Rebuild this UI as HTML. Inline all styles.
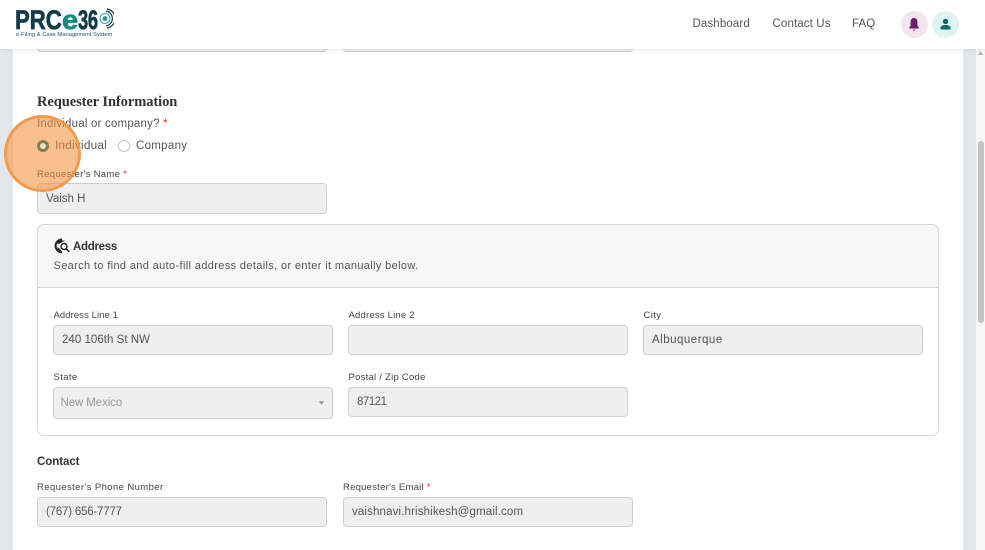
<!DOCTYPE html>
<html><head><meta charset="utf-8"><style>
html,body{margin:0;padding:0;width:985px;height:550px;overflow:hidden;background:#fff;font-family:"Liberation Sans",sans-serif}
.a{position:absolute;white-space:nowrap}
.l{font-size:9.5px;letter-spacing:.36px;color:#444;line-height:12px}
.i{position:absolute;box-sizing:border-box;background:#efefef;border:1px solid #cfcfcf;border-radius:4px;font-size:11.5px;letter-spacing:.3px;color:#555;padding-left:8px;display:flex;align-items:center}
.r{color:#d9342b}
.n{font-size:11.5px;letter-spacing:.12px;color:#555;top:17px;line-height:14px}
.g{font-size:27px;font-weight:bold;line-height:30px;top:5px;transform-origin:left;-webkit-text-stroke:.7px currentColor}
</style></head><body>
<div class="a" style="left:0;top:0;width:13px;height:550px;background:#e2e7ee"></div>
<div class="a" style="left:963px;top:0;width:13px;height:550px;background:#e2e7ee"></div>
<div class="a" style="left:976px;top:0;width:9px;height:550px;background:#f7f7f7"></div>
<div class="a" style="left:977.5px;top:141px;width:6px;height:182px;background:#c4c4c4;border-radius:3px"></div>
<svg class="a" style="left:977px;top:50px" width="7" height="6"><path d="M3.5 1L6.5 5H.5z" fill="#bbb"/></svg>

<div class="i" style="left:37px;top:30px;width:290px;height:22px"></div>
<div class="i" style="left:343px;top:30px;width:290px;height:22px"></div>

<div class="a" style="left:0;top:0;width:985px;height:49px;background:#fff;box-shadow:0 2px 5px rgba(0,0,0,.07)"></div>
<div class="a g" style="left:15px;color:#123a48;transform:scaleX(.82)">PRC</div>
<div class="a g" style="left:62px;color:#178a85;transform:scaleX(1.08)">e</div>
<div class="a g" style="left:78px;color:#123a48;transform:scaleX(.68);letter-spacing:-.5px">36</div>
<svg class="a" style="left:96px;top:8px" width="18" height="21" viewBox="0 0 18 21"><circle cx="9" cy="10.500" r="2.400" fill="#1a9c98"/><circle cx="9" cy="10.500" r="5" fill="none" stroke="#3fa8a4" stroke-width="1.100"/><path d="M10 3a7.600 7.600 0 0 1 0 15M11 1a9.600 9.600 0 0 1 0 19" fill="none" stroke="#123a48" stroke-width="1.200"/></svg>
<div class="a" style="left:16px;top:30.500px;font-size:5.800px;letter-spacing:.01px;color:#33505a;line-height:8px">e-Filing &amp; Case Management System</div>

<div class="a n" style="left:692.500px">Dashboard</div>
<div class="a n" style="left:772.500px">Contact Us</div>
<div class="a n" style="left:852px">FAQ</div>
<div class="a" style="left:901px;top:11px;width:27px;height:27px;border-radius:50%;background:#f3e5f0"></div>
<svg class="a" style="left:907px;top:17px" width="14" height="15" viewBox="0 0 14 15"><path d="M7 1C5 1 3.600 2.600 3.600 5V8.500L2.200 10.800V11.500H11.800V10.800L10.400 8.500V5C10.400 2.600 9 1 7 1Z" fill="#6e1f63"/><path d="M5.500 12.600h3L7 14z" fill="#6e1f63"/></svg>
<div class="a" style="left:932px;top:11px;width:27px;height:27px;border-radius:50%;background:#e0f3f3"></div>
<svg class="a" style="left:939px;top:18px" width="13" height="13" viewBox="0 0 13 13"><circle cx="6.500" cy="3.500" r="2.700" fill="#0f6b66"/><path d="M1.500 11.500V10C1.500 8 3.500 7 6.500 7S11.500 8 11.500 10V11.500Z" fill="#0f6b66"/></svg>

<div class="a" style="left:37px;top:92.500px;font-family:'Liberation Serif',serif;font-weight:bold;font-size:14.500px;letter-spacing:-.08px;color:#333;line-height:18px">Requester Information</div>
<div class="a" style="left:37px;top:116.500px;font-size:11.500px;letter-spacing:.2px;color:#555;line-height:14px">Individual or company? <span class="r">*</span></div>

<div class="a" style="left:55px;top:139px;font-size:11.500px;letter-spacing:.35px;color:#555;line-height:14px">Individual</div>
<div class="a" style="left:118px;top:140px;width:12px;height:12px;box-sizing:border-box;border-radius:50%;background:#fff;border:1px solid #c4c4c4"></div>
<div class="a" style="left:136px;top:139px;font-size:11.500px;letter-spacing:.3px;color:#555;line-height:14px">Company</div>

<div class="a l" style="left:37px;top:169px;letter-spacing:.3px">Requester's Name <span class="r">*</span></div>
<div class="i" style="left:37px;top:183px;width:290px;height:31px;letter-spacing:0">Vaish H</div>

<div class="a" style="left:37px;top:224px;width:902px;height:212px;box-sizing:border-box;border:1px solid #d6d6d6;border-radius:7px;background:#fff"></div>
<div class="a" style="left:38px;top:225px;width:900px;height:62px;background:#f8f8f8;border-bottom:1px solid #d6d6d6;border-radius:6px 6px 0 0"></div>
<svg class="a" style="left:54px;top:238px" width="17" height="17" viewBox="0 0 17 17"><path d="M8 1.500A6.300 6.300 0 1 0 8 14.300" fill="none" stroke="#222" stroke-width="2"/><path d="M2 5L6 2.500L11 2.500L5 6ZM3 9L6 11L8 14L4 12Z" fill="#222"/><circle cx="10" cy="8.500" r="3" fill="#fff" stroke="#222" stroke-width="1.400"/><path d="M12.200 10.800L15.200 13.800" stroke="#222" stroke-width="1.600"/></svg>
<div class="a" style="left:73px;top:240px;font-size:11.500px;letter-spacing:-.3px;font-weight:bold;color:#333;line-height:14px">Address</div>
<div class="a" style="left:53.500px;top:258.500px;font-size:11px;letter-spacing:.36px;color:#555;line-height:14px">Search to find and auto-fill address details, or enter it manually below.</div>

<div class="a l" style="left:53.500px;top:310px;letter-spacing:.08px">Address Line 1</div>
<div class="i" style="left:53px;top:325px;width:280px;height:30px;letter-spacing:.03px">240 106th St NW</div>
<div class="a l" style="left:348.500px;top:310px;letter-spacing:.2px">Address Line 2</div>
<div class="i" style="left:348px;top:325px;width:280px;height:30px"></div>
<div class="a l" style="left:643.500px;top:310px">City</div>
<div class="i" style="left:643px;top:325px;width:280px;height:30px;letter-spacing:.5px">Albuquerque</div>

<div class="a l" style="left:53.500px;top:372px">State</div>
<div class="i" style="left:53px;top:387px;width:280px;height:32px;padding-left:6.500px;font-size:11.500px;letter-spacing:-.1px;color:#999">New Mexico</div>
<svg class="a" style="left:318px;top:400px" width="7" height="6"><path d="M.8 1.200H6.200L3.500 5z" fill="#999"/></svg>
<div class="a l" style="left:348.500px;top:372px;letter-spacing:.25px">Postal / Zip Code</div>
<div class="i" style="left:348px;top:387px;width:280px;height:30px;letter-spacing:-.5px">87121</div>

<div class="a" style="left:37px;top:455px;font-size:11.500px;letter-spacing:-.05px;font-weight:bold;color:#333;line-height:14px">Contact</div>
<div class="a l" style="left:37px;top:482px;letter-spacing:.4px">Requester's Phone Number</div>
<div class="i" style="left:37px;top:497px;width:290px;height:30px;letter-spacing:-.2px">(767) 656-7777</div>
<div class="a l" style="left:343px;top:482px;letter-spacing:.24px">Requester's Email <span class="r">*</span></div>
<div class="i" style="left:343px;top:497px;width:290px;height:30px;letter-spacing:.14px">vaishnavi.hrishikesh@gmail.com</div>

<div class="a" style="left:4px;top:115px;width:77px;height:77px;box-sizing:border-box;border-radius:50%;background:rgba(247,145,60,.58);border:3.500px solid #f6994a"></div>
<div class="a" style="left:37px;top:140px;width:12px;height:12px;box-sizing:border-box;border-radius:50%;background:#eee0c0;border:3.500px solid #857b52"></div>
</body></html>
